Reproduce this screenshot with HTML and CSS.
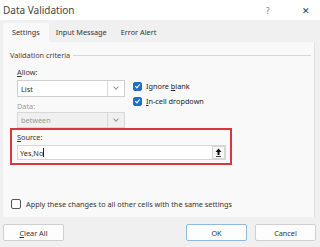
FILE: index.html
```html
<!DOCTYPE html>
<html>
<head>
<title>Data Validation</title>
<meta name="viewport" content="width=device-width, initial-scale=1.0">
<link rel="stylesheet" href="styles.css">
</head>
<body>

<div class="dialog">
  <div class="titlebar">
    <span class="title">Data Validation</span>
    <span class="help">?</span>
    <span class="close">&#x2715;</span>
  </div>

  <div class="tabs">
    <div class="tab active">Settings</div>
    <div class="tab">Input Message</div>
    <div class="tab">Error Alert</div>
  </div>

  <div class="panel">
    <div class="group-title"><span>Validation criteria</span></div>

    <div class="criteria">
      <div class="fields">
        <label class="label"><u>A</u>llow:</label>
        <div class="select">List<span class="chev"></span></div>
        <label class="label dim">Data:</label>
        <div class="select disabled">between<span class="chev"></span></div>
      </div>
      <div class="checks">
        <div class="check"><span class="box on"></span><span>Ignore <u>b</u>lank</span></div>
        <div class="check"><span class="box on"></span><span><u>I</u>n-cell dropdown</span></div>
      </div>
    </div>

    <div class="source-box">
      <label class="label"><u>S</u>ource:</label>
      <div class="source-input">
        <span class="value">Yes,No<span class="caret"></span></span>
        <span class="pick">
          <svg width="7" height="9" viewBox="0 0 7 9"><path d="M3.5 0.5 L6.5 4 H4.5 V7 H2.5 V4 H0.5 Z" fill="#111"/><path d="M1 8.5 H6" stroke="#111" stroke-width="0.8"/></svg>
        </span>
      </div>
    </div>

    <div class="apply"><span class="box"></span><span>Apply these changes to all other cells with the same settings</span></div>
  </div>

  <div class="footer">
    <button class="btn"><u>C</u>lear All</button>
    <span class="spacer"></span>
    <button class="btn ok">OK</button>
    <button class="btn">Cancel</button>
  </div>
</div>

</body>
</html>
```

FILE: styles.css
```css
body {
  margin: 0;
  font-family: "Noto Sans", sans-serif;
  font-size: 7.3px;
  color: #2a2a2a;
  background: #f0f0f0;
}

.dialog {
  width: 320px;
  height: 247px;
  overflow: hidden;
}

.titlebar {
  height: 20px;
  background: #fff;
  display: flex;
  align-items: center;
  padding: 0 3px;
}
.title {
  flex: 1;
  font-size: 10px;
  color: #444;
}
.help {
  width: 33px;
  color: #777;
  font-size: 8px;
}
.close {
  width: 14px;
  margin-right: 4px;
  color: #333;
  font-size: 9px;
  text-align: center;
}

.tabs {
  height: 22px;
  display: flex;
  align-items: flex-end;
  padding-left: 3px;
  background: #f0f0f0;
}
.tab {
  height: 19px;
  line-height: 18px;
  padding: 0 7px;
  color: #333;
}
.tab.active {
  background: #f9f9f9;
  padding: 0 9px;
}

.panel {
  margin: 0 5px 0 3px;
  height: 175px;
  background: #f9f9f9;
  border-right: 1px solid #e2e2e2;
  box-sizing: border-box;
  padding: 7px 3px 0 7px;
}

.group-title {
  height: 12px;
  display: flex;
  align-items: center;
  gap: 3px;
  color: #444;
}
.group-title::after {
  content: "";
  flex: 1;
  border-top: 1px solid #d8d8d8;
}

.criteria {
  display: flex;
  padding-left: 7px;
  margin-top: 6px;
}
.fields {
  width: 108px;
}
.label {
  display: block;
  color: #333;
  height: 10px;
  line-height: 10px;
  margin-bottom: 3px;
}
.label.dim {
  color: #999;
  margin-top: 4px;
  margin-bottom: 1px;
}
.select {
  height: 17px;
  box-sizing: border-box;
  border: 1px solid #cfcfcf;
  background: #fff;
  display: flex;
  align-items: center;
  padding-left: 3px;
}
.select.disabled {
  height: 16px;
  background: #f0f0f0;
  color: #999;
  border-color: #d8d8d8;
}
.chev {
  margin-left: auto;
  width: 17px;
  height: 100%;
  border-left: 1px solid #d8d8d8;
  box-sizing: border-box;
  position: relative;
}
.chev::after {
  content: "";
  position: absolute;
  left: 6px;
  top: 4px;
  width: 3px;
  height: 3px;
  border-right: 1px solid #999;
  border-bottom: 1px solid #999;
  transform: rotate(45deg);
}

.checks {
  margin-left: 8px;
  margin-top: 12px;
}
.check {
  display: flex;
  align-items: center;
  height: 14px;
  margin-bottom: 1px;
  color: #222;
}
.box {
  width: 9px;
  height: 9px;
  box-sizing: border-box;
  border: 1px solid #666;
  border-radius: 2px;
  margin-right: 4px;
  background: #fff;
  position: relative;
  flex-shrink: 0;
}
.box.on {
  background: #1f6fc5;
  border-color: #1f6fc5;
}
.box.on::after {
  content: "";
  position: absolute;
  left: 2px;
  top: 0px;
  width: 2px;
  height: 4px;
  border-right: 1px solid #fff;
  border-bottom: 1px solid #fff;
  transform: rotate(40deg);
}

.source-box {
  width: 222px;
  height: 37px;
  box-sizing: border-box;
  border: 2px solid #d9363e;
  padding: 2px 4px 0 5px;
}
.source-input {
  height: 15px;
  box-sizing: border-box;
  border: 1px solid #d6d6d6;
  background: #fff;
  display: flex;
  align-items: center;
  padding-left: 2px;
}
.value {
  flex: 1;
  display: flex;
  align-items: center;
}
.caret {
  width: 1px;
  height: 9px;
  background: #222;
}
.pick {
  width: 13px;
  height: 13px;
  box-sizing: border-box;
  border: 1px solid #d6d6d6;
  background: #f7f7f7;
  display: flex;
  align-items: center;
  justify-content: center;
}

.apply {
  display: flex;
  align-items: center;
  height: 10px;
  margin-top: 34px;
  color: #333;
}
.apply .box {
  width: 10px;
  height: 10px;
  border-color: #555;
  margin-right: 5px;
  margin-left: 1px;
}

.footer {
  display: flex;
  padding: 7px 4px 0 3px;
  gap: 8px;
}
.spacer {
  flex: 1;
}
.btn {
  width: 61px;
  height: 17px;
  font-family: inherit;
  font-size: 7.3px;
  background: #fdfdfd;
  border: 1px solid #d0d0d0;
  border-radius: 2px;
  color: #333;
  padding: 0;
}
.btn.ok {
  border-color: #8fb8da;
}
```
